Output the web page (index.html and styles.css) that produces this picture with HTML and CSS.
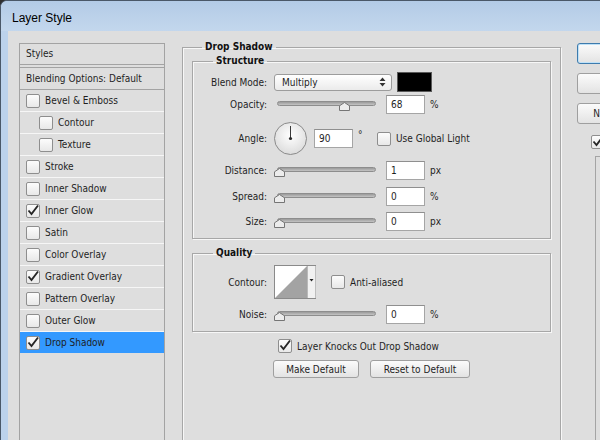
FILE: index.html
```html
<!DOCTYPE html>
<html>
<head>
<meta charset="utf-8">
<title>Layer Style</title>
<link rel="stylesheet" href="styles.css">
</head>
<body>
<div class="window">
  <div class="titlebar">Layer Style</div>
  <div class="client">
    <div class="styles-panel">
      <div class="sp-head">Styles</div>
      <div class="sp-blend">Blending Options: Default</div>
      <div class="sp-item"><span class="cb"></span><span>Bevel &amp; Emboss</span></div>
      <div class="sp-item sub"><span class="cb"></span><span>Contour</span></div>
      <div class="sp-item sub"><span class="cb"></span><span>Texture</span></div>
      <div class="sp-item"><span class="cb"></span><span>Stroke</span></div>
      <div class="sp-item"><span class="cb"></span><span>Inner Shadow</span></div>
      <div class="sp-item"><span class="cb"><svg viewBox="0 0 12 12"><path d="M1.5 5.5 L4.5 9 L11 0.5"/></svg></span><span>Inner Glow</span></div>
      <div class="sp-item"><span class="cb"></span><span>Satin</span></div>
      <div class="sp-item"><span class="cb"></span><span>Color Overlay</span></div>
      <div class="sp-item"><span class="cb"><svg viewBox="0 0 12 12"><path d="M1.5 5.5 L4.5 9 L11 0.5"/></svg></span><span>Gradient Overlay</span></div>
      <div class="sp-item"><span class="cb"></span><span>Pattern Overlay</span></div>
      <div class="sp-item"><span class="cb"></span><span>Outer Glow</span></div>
      <div class="sp-item active"><span class="cb"><svg viewBox="0 0 12 12"><path d="M1.5 5.5 L4.5 9 L11 0.5"/></svg></span><span>Drop Shadow</span></div>
    </div>

    <div class="main">
      <fieldset class="group outer">
        <legend>Drop Shadow</legend>

        <fieldset class="group inner structure">
          <legend>Structure</legend>
          <div class="row r-blend">
            <span class="lbl">Blend Mode:</span>
            <div class="select"><span>Multiply</span>
              <svg class="updown" viewBox="0 0 7 10"><path d="M0.5 4 L3.5 0.5 L6.5 4 Z M0.5 6 L3.5 9.5 L6.5 6 Z"/></svg>
            </div>
            <span class="swatch"></span>
          </div>
          <div class="row r-opacity">
            <span class="lbl">Opacity:</span>
            <div class="slider"><span class="track"></span>
              <svg class="thumb" style="--v:0.68" viewBox="0 0 11 9"><polygon points="0.5,3.8 5.5,0.5 10.5,3.8 10.5,8.5 0.5,8.5"/></svg>
            </div>
            <span class="field">68</span><span class="unit">%</span>
          </div>
          <div class="row r-angle">
            <span class="lbl">Angle:</span>
            <svg class="dial" viewBox="0 0 33 33">
              <defs><radialGradient id="dg" cx="50%" cy="40%" r="60%"><stop offset="0" stop-color="#ffffff"/><stop offset="1" stop-color="#dcdcdc"/></radialGradient></defs>
              <circle cx="16.5" cy="16.5" r="16" fill="url(#dg)" stroke="#8a8a8a"/>
              <line x1="16.5" y1="16.5" x2="16.5" y2="4" stroke="#3a3a3a" stroke-width="1"/>
              <circle cx="16.5" cy="16.5" r="1.6" fill="#2a2a2a"/>
            </svg>
            <span class="field">90</span><span class="deg">°</span>
            <span class="cb"></span><span class="cblabel">Use Global Light</span>
          </div>
          <div class="row r-distance">
            <span class="lbl">Distance:</span>
            <div class="slider"><span class="track"></span>
              <svg class="thumb" style="--v:0" viewBox="0 0 11 9"><polygon points="0.5,3.8 5.5,0.5 10.5,3.8 10.5,8.5 0.5,8.5"/></svg>
            </div>
            <span class="field">1</span><span class="unit">px</span>
          </div>
          <div class="row r-spread">
            <span class="lbl">Spread:</span>
            <div class="slider"><span class="track"></span>
              <svg class="thumb" style="--v:0" viewBox="0 0 11 9"><polygon points="0.5,3.8 5.5,0.5 10.5,3.8 10.5,8.5 0.5,8.5"/></svg>
            </div>
            <span class="field">0</span><span class="unit">%</span>
          </div>
          <div class="row r-size">
            <span class="lbl">Size:</span>
            <div class="slider"><span class="track"></span>
              <svg class="thumb" style="--v:0" viewBox="0 0 11 9"><polygon points="0.5,3.8 5.5,0.5 10.5,3.8 10.5,8.5 0.5,8.5"/></svg>
            </div>
            <span class="field">0</span><span class="unit">px</span>
          </div>
        </fieldset>

        <fieldset class="group inner quality">
          <legend>Quality</legend>
          <div class="row r-contour">
            <span class="lbl">Contour:</span>
            <svg class="contour" viewBox="0 0 42 34">
              <rect x="0.5" y="0.5" width="41" height="33" fill="#ffffff" stroke="#8a8a8a"/>
              <polygon points="1,33 33,1 33,33" fill="#a3a3a3"/>
              <rect x="33.5" y="1" width="8" height="32" fill="#f1f1f1"/>
              <line x1="33.5" y1="1" x2="33.5" y2="33" stroke="#b9b9b9"/>
              <polygon points="35.5,14 39.5,14 37.5,16.5" fill="#222"/>
            </svg>
            <span class="cb"></span><span class="cblabel">Anti-aliased</span>
          </div>
          <div class="row r-noise">
            <span class="lbl">Noise:</span>
            <div class="slider"><span class="track"></span>
              <svg class="thumb" style="--v:0" viewBox="0 0 11 9"><polygon points="0.5,3.8 5.5,0.5 10.5,3.8 10.5,8.5 0.5,8.5"/></svg>
            </div>
            <span class="field">0</span><span class="unit">%</span>
          </div>
        </fieldset>

        <div class="knock">
          <span class="cb"><svg viewBox="0 0 12 12"><path d="M1.5 5.5 L4.5 9 L11 0.5"/></svg></span>
          <span class="cblabel">Layer Knocks Out Drop Shadow</span>
        </div>
        <div class="btn-row">
          <button class="btn b-make">Make Default</button>
          <button class="btn b-reset">Reset to Default</button>
        </div>
      </fieldset>
    </div>

    <div class="side">
      <button class="btn side-btn default">OK</button>
      <button class="btn side-btn">Cancel</button>
      <button class="btn side-btn">New Style...</button>
      <div class="preview-row"><span class="cb"><svg viewBox="0 0 12 12"><path d="M1.5 5.5 L4.5 9 L11 0.5"/></svg></span><span class="cblabel">Preview</span></div>
      <div class="preview-box"></div>
    </div>
  </div>
</div>
</body>
</html>
```

FILE: styles.css
```css
* { box-sizing: border-box; }
html, body { margin: 0; padding: 0; }
body {
  width: 600px;
  height: 440px;
  overflow: hidden;
  background: #2e2e2e;
  font-family: "DejaVu Sans Condensed", "DejaVu Sans", sans-serif;
  font-stretch: condensed;
  font-size: 10px;
  color: #1e1e1e;
}

.window {
  width: 600px;
  height: 440px;
  background: #bcd2eb;
  border-top: 1px solid #4a5868;
  border-left: 1px solid #4a5868;
  border-top-left-radius: 7px;
  display: flex;
  flex-direction: column;
  overflow: hidden;
}

.titlebar {
  flex: none;
  height: 30px;
  padding: 10px 0 0 11px;
  line-height: 14px;
  background: linear-gradient(#b3cbe6, #c3d7ed);
  font-family: "Liberation Sans", Arial, sans-serif;
  font-stretch: normal;
  font-size: 12px;
  color: #000;
}

.client {
  flex: 1;
  margin-left: 7px;
  background: #dedede;
  display: flex;
  align-items: flex-start;
  min-height: 0;
}

/* ---------- Styles list ---------- */
.styles-panel {
  flex: none;
  width: 146px;
  height: 420px;
  margin: 12px 0 0 11px;
  border: 1px solid #a3a3a3;
}
.sp-head {
  height: 21px;
  line-height: 20px;
  padding-left: 6px;
  border-bottom: 1px solid #a3a3a3;
}
.sp-blend {
  margin-top: 2px;
  height: 23px;
  line-height: 21px;
  padding-left: 6px;
  border-top: 1px solid #a3a3a3;
  border-bottom: 1px solid #a3a3a3;
}
.sp-item {
  height: 22px;
  display: flex;
  align-items: center;
  gap: 5px;
  padding-left: 6px;
  border-bottom: 1px solid #f6f6f6;
}
.sp-item.sub { padding-left: 19px; }
.sp-item.active { background: #3399ff; border-bottom-color: #dedede; }

/* ---------- checkbox ---------- */
.cb {
  flex: none;
  display: inline-block;
  width: 14px;
  height: 14px;
  border: 1px solid #8e8e8e;
  border-radius: 2px;
  background: linear-gradient(#fcfcfc, #e8e8e8);
}
.cb svg {
  display: block;
  width: 12px;
  height: 12px;
  overflow: visible;
  fill: none;
  stroke: #262626;
  stroke-width: 1.9;
}
.cblabel { margin-left: 5px; white-space: nowrap; }

/* ---------- main area ---------- */
.main {
  flex: none;
  width: 379px;
  margin-left: 17px;
}
.group {
  margin: 0;
  min-width: 0;
  border: 1px solid #a7a7a7;
  box-shadow: inset 1px 1px 0 #f7f7f7, 1px 1px 0 #f7f7f7;
}
.group legend {
  padding: 0 3px;
  line-height: 14px;
  font-weight: bold;
  color: #111;
}
.outer {
  margin-top: 9px;
  height: 420px;
  padding: 0 9px;
}
.outer > legend { margin-left: 10px; }
.inner { padding: 0; }
.inner > legend { margin-left: 20px; }
.structure { padding-bottom: 7px; }
.quality { margin-top: 7px; padding-bottom: 7px; }

.row {
  display: flex;
  align-items: center;
}
.lbl {
  flex: none;
  width: 74px;
  margin-right: 7px;
  text-align: right;
  white-space: nowrap;
}

.r-blend { margin-top: 4px; height: 20px; }
.r-opacity { margin-top: 3px; height: 19px; }
.r-angle { margin-top: 8px; height: 33px; }
.r-distance { margin-top: 6px; height: 19px; }
.r-spread { margin-top: 7px; height: 19px; }
.r-size { margin-top: 6px; height: 19px; }
.r-contour { margin-top: 5px; height: 34px; }
.r-noise { margin-top: 6px; height: 19px; }

.select {
  flex: none;
  width: 118px;
  height: 17px;
  display: flex;
  align-items: center;
  justify-content: space-between;
  padding: 0 5px 0 7px;
  border: 1px solid #9c9c9c;
  border-radius: 3px;
  background: linear-gradient(#ffffff, #ebebeb);
}
.updown { width: 7px; height: 10px; fill: #333; }
.swatch {
  flex: none;
  width: 35px;
  height: 20px;
  margin-left: 5px;
  background: #000;
  border: 1px solid #5a5a5a;
}

.slider {
  flex: none;
  position: relative;
  width: 99px;
  height: 19px;
  margin-left: 3px;
}
.track {
  display: block;
  margin-top: 6px;
  height: 5px;
  border: 1px solid #8d8d8d;
  border-radius: 3px;
  background: linear-gradient(#9a9a9a, #c4c4c4);
}
.thumb {
  position: absolute;
  top: 7px;
  left: calc(var(--v) * 96px - 3.5px);
  width: 11px;
  height: 9px;
  fill: #ececec;
  stroke: #757575;
  stroke-width: 1;
}

.field {
  flex: none;
  width: 39px;
  height: 19px;
  margin-left: 10px;
  padding-left: 4px;
  line-height: 17px;
  background: #fff;
  border: 1px solid #a5a5a5;
  border-top-color: #8f8f8f;
}
.unit { margin-left: 5px; }

.dial { flex: none; width: 33px; height: 33px; }
.r-angle .field { margin-left: 7px; }
.deg { margin-left: 5px; align-self: flex-start; margin-top: 7px; width: 4px; }
.r-angle .cb { margin-left: 15px; }

.contour { flex: none; width: 42px; height: 34px; }
.r-contour .cb { margin-left: 15px; }

.knock {
  display: flex;
  align-items: center;
  height: 14px;
  margin-top: 7px;
  padding-left: 86px;
}

.btn {
  font: inherit;
  color: #1e1e1e;
  height: 18px;
  padding: 0;
  border: 1px solid #9f9f9f;
  border-radius: 3px;
  background: linear-gradient(#fbfbfb, #e3e3e3);
  white-space: nowrap;
}
.btn-row {
  display: flex;
  justify-content: center;
  gap: 11px;
  margin-top: 7px;
}
.b-make { width: 86px; }
.b-reset { width: 100px; }

/* ---------- right column ---------- */
.side {
  flex: none;
  width: 90px;
  margin: 12px 0 0 16px;
  display: flex;
  flex-direction: column;
  align-items: flex-start;
}
.side-btn {
  width: 86px;
  height: 21px;
  margin-bottom: 9px;
}
.side-btn.default {
  border-color: #3d7bad;
  box-shadow: inset 0 0 0 1px #bfe1f7;
}
.preview-row {
  display: flex;
  align-items: center;
  margin: 2px 0 0 14px;
}
.preview-box {
  width: 100px;
  height: 300px;
  margin: 7px 0 0 18px;
  border: 1px solid #a4a4a4;
  box-shadow: 1px 1px 0 #f7f7f7;
}
```
